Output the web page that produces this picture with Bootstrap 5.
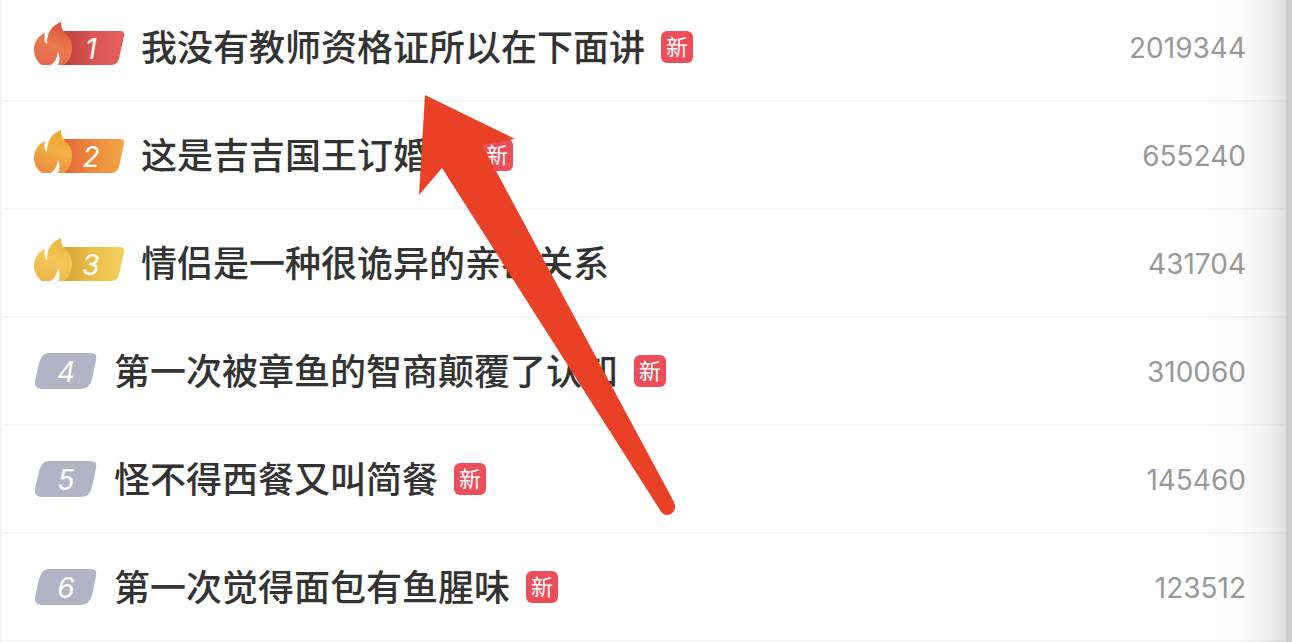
<!DOCTYPE html>
<html lang="zh-CN">
<head>
<meta charset="utf-8">
<meta name="viewport" content="width=device-width, initial-scale=1">
<title>热榜</title>
<link href="https://cdn.jsdelivr.net/npm/bootstrap@5.3.0/dist/css/bootstrap.min.css" rel="stylesheet">
<style>
  body { font-family: Inter, "Noto Sans CJK SC", sans-serif; background: #fff; }
  .board { border-left: 2px solid #f3f3f4; border-right: 6px solid #cbcbd2; height: 100vh; }
  .board::after { content: ""; position: absolute; inset: 0 0 0 auto; width: 80px; pointer-events: none;
    background: linear-gradient(to right, rgba(0,0,0,0), rgba(0,0,0,.02) 50%, rgba(0,0,0,.06) 78%, rgba(0,0,0,.13)); }
  .hot-list { margin-top: -6px; }
  .hot-row { height: 108px; padding: 0 40px 0 32px; border-bottom: 2px solid #f7f7f7; }
  .title { font-size: 36px; line-height: 48px; font-weight: 500; color: #333; padding-top: 2px; }
  .tag-new { width: 32px; height: 32px; border-radius: 6px; background: #ee4d5a; color: #fff; font-size: 22px; line-height: 32px; margin-left: 16px; }
  .heat { font-size: 28px; line-height: 40px; color: #999; padding-top: 2px; }
  .rank { color: #fff; font-size: 28px; font-style: italic; line-height: 36px; }
  .rank-top { width: 92px; height: 50px; margin-right: 15px; }
  .rank-rest { width: 64px; height: 44px; margin-right: 16px; }
  .rank svg { position: absolute; left: 0; top: 0; }
  .rank span { position: relative; }
  .rank-top span { margin: 9px 0 0 22px; }
  .rank-rest span { margin-top: 5px; }
  .pointer { position: absolute; left: 415px; top: 94px; pointer-events: none; }
</style>
</head>
<body>
<svg width="0" height="0" class="position-absolute" aria-hidden="true">
  <defs>
    <linearGradient id="bar1"><stop offset=".1" stop-color="#c24441"/><stop offset=".5" stop-color="#dc5554"/><stop offset="1" stop-color="#e5605f"/></linearGradient>
    <linearGradient id="bar2"><stop offset=".1" stop-color="#e36c38"/><stop offset=".5" stop-color="#ed8b3d"/><stop offset="1" stop-color="#f2a642"/></linearGradient>
    <linearGradient id="bar3"><stop offset=".1" stop-color="#dda63a"/><stop offset=".5" stop-color="#ebbf49"/><stop offset="1" stop-color="#f3d160"/></linearGradient>
    <linearGradient id="fire1" x1=".7" y1="0" x2=".4" y2="1"><stop stop-color="#dc4d3c"/><stop offset=".55" stop-color="#ea7a4c"/><stop offset="1" stop-color="#e76951"/></linearGradient>
    <linearGradient id="fire2" x1=".7" y1="0" x2=".4" y2="1"><stop stop-color="#edaa32"/><stop offset=".5" stop-color="#f3ae40"/><stop offset="1" stop-color="#ef8d40"/></linearGradient>
    <linearGradient id="fire3" x1=".7" y1="0" x2=".4" y2="1"><stop stop-color="#e8b83a"/><stop offset=".5" stop-color="#f3c657"/><stop offset="1" stop-color="#f2b84a"/></linearGradient>
    <path id="bar" d="M29 9H86Q91 9 90 14L85 37Q83 43 77 43H28Z"/>
    <path id="flame" d="M8 43C3 40 0 34 0 28C0 20 4 14 11 11C10 15 10 20 13 22C13 11 17 4 27 0C27 5 28 8 33 13C37 17 38 21 38 26C38 33 35 40 29 43H24C26 39 26 34 24 30C23 36 21 40 17 43Z"/>
    <path id="slant" d="M14 4H56Q64 4 62 11L58 30Q56 40 46 40H8Q0 40 1 32L5 14Q8 4 14 4Z"/>
  </defs>
</svg>
<main class="board position-relative overflow-hidden">
  <ol class="hot-list list-unstyled mb-0">
    <li class="hot-row d-flex align-items-center">
      <div class="rank rank-top position-relative d-flex justify-content-center flex-shrink-0"><svg width="92" height="44" aria-hidden="true"><use href="#bar" fill="url(#bar1)"/><use href="#flame" fill="url(#fire1)"/></svg><span>1</span></div>
      <span class="title text-nowrap">我没有教师资格证所以在下面讲</span><span class="tag-new text-center flex-shrink-0">新</span>
      <span class="heat ms-auto">2019344</span>
    </li>
    <li class="hot-row d-flex align-items-center">
      <div class="rank rank-top position-relative d-flex justify-content-center flex-shrink-0"><svg width="92" height="44" aria-hidden="true"><use href="#bar" fill="url(#bar2)"/><use href="#flame" fill="url(#fire2)"/></svg><span>2</span></div>
      <span class="title text-nowrap">这是吉吉国王订婚吗</span><span class="tag-new text-center flex-shrink-0">新</span>
      <span class="heat ms-auto">655240</span>
    </li>
    <li class="hot-row d-flex align-items-center">
      <div class="rank rank-top position-relative d-flex justify-content-center flex-shrink-0"><svg width="92" height="44" aria-hidden="true"><use href="#bar" fill="url(#bar3)"/><use href="#flame" fill="url(#fire3)"/></svg><span>3</span></div>
      <span class="title text-nowrap">情侣是一种很诡异的亲密关系</span>
      <span class="heat ms-auto">431704</span>
    </li>
    <li class="hot-row d-flex align-items-center">
      <div class="rank rank-rest position-relative d-flex justify-content-center flex-shrink-0"><svg width="68" height="44" aria-hidden="true"><use href="#slant" fill="#afb5c4"/></svg><span>4</span></div>
      <span class="title text-nowrap">第一次被章鱼的智商颠覆了认知</span><span class="tag-new text-center flex-shrink-0">新</span>
      <span class="heat ms-auto">310060</span>
    </li>
    <li class="hot-row d-flex align-items-center">
      <div class="rank rank-rest position-relative d-flex justify-content-center flex-shrink-0"><svg width="68" height="44" aria-hidden="true"><use href="#slant" fill="#afb5c4"/></svg><span>5</span></div>
      <span class="title text-nowrap">怪不得西餐又叫简餐</span><span class="tag-new text-center flex-shrink-0">新</span>
      <span class="heat ms-auto">145460</span>
    </li>
    <li class="hot-row d-flex align-items-center">
      <div class="rank rank-rest position-relative d-flex justify-content-center flex-shrink-0"><svg width="68" height="44" aria-hidden="true"><use href="#slant" fill="#afb5c4"/></svg><span>6</span></div>
      <span class="title text-nowrap">第一次觉得面包有鱼腥味</span><span class="tag-new text-center flex-shrink-0">新</span>
      <span class="heat ms-auto">123512</span>
    </li>
  </ol>
  <svg class="pointer" width="262" height="424" aria-hidden="true"><path fill="#ea4126" d="M8 1L98 45L65 51L257 408C260 415 256 421 250 421Q246 421 243 416L25 74L2 101Z"/></svg>
</main>
<script src="https://cdn.jsdelivr.net/npm/bootstrap@5.3.0/dist/js/bootstrap.bundle.min.js"></script>
</body>
</html>
